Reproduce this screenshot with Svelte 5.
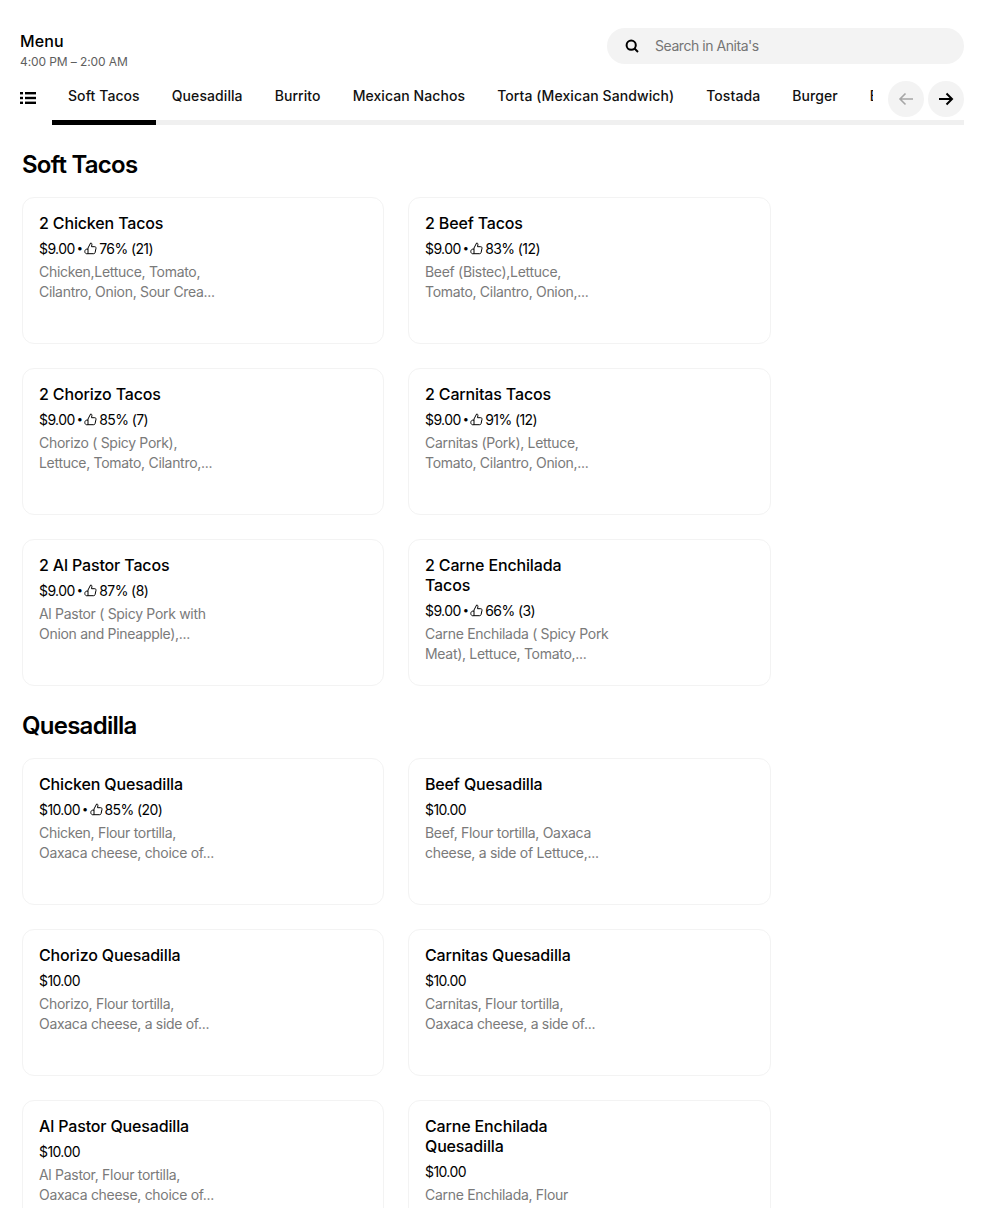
<script lang="ts">
  interface Item {
    name: string[];
    price: string;
    rating?: string;
    desc: string[];
  }

  const tabs = ['Soft Tacos', 'Quesadilla', 'Burrito', 'Mexican Nachos', 'Torta (Mexican Sandwich)', 'Tostada', 'Burger', 'Breakfast'];

  const sections: { title: string; items: Item[] }[] = [
    {
      title: 'Soft Tacos',
      items: [
        { name: ['2 Chicken Tacos'], price: '$9.00', rating: '76% (21)', desc: ['Chicken,Lettuce, Tomato,', 'Cilantro, Onion, Sour Crea...'] },
        { name: ['2 Beef Tacos'], price: '$9.00', rating: '83% (12)', desc: ['Beef (Bistec),Lettuce,', 'Tomato, Cilantro, Onion,...'] },
        { name: ['2 Chorizo Tacos'], price: '$9.00', rating: '85% (7)', desc: ['Chorizo ( Spicy Pork),', 'Lettuce, Tomato, Cilantro,...'] },
        { name: ['2 Carnitas Tacos'], price: '$9.00', rating: '91% (12)', desc: ['Carnitas (Pork), Lettuce,', 'Tomato, Cilantro, Onion,...'] },
        { name: ['2 Al Pastor Tacos'], price: '$9.00', rating: '87% (8)', desc: ['Al Pastor ( Spicy Pork with', 'Onion and Pineapple),...'] },
        { name: ['2 Carne Enchilada', 'Tacos'], price: '$9.00', rating: '66% (3)', desc: ['Carne Enchilada ( Spicy Pork', 'Meat), Lettuce, Tomato,...'] }
      ]
    },
    {
      title: 'Quesadilla',
      items: [
        { name: ['Chicken Quesadilla'], price: '$10.00', rating: '85% (20)', desc: ['Chicken, Flour tortilla,', 'Oaxaca cheese, choice of...'] },
        { name: ['Beef Quesadilla'], price: '$10.00', desc: ['Beef, Flour tortilla, Oaxaca', 'cheese, a side of Lettuce,...'] },
        { name: ['Chorizo Quesadilla'], price: '$10.00', desc: ['Chorizo, Flour tortilla,', 'Oaxaca cheese, a side of...'] },
        { name: ['Carnitas Quesadilla'], price: '$10.00', desc: ['Carnitas, Flour tortilla,', 'Oaxaca cheese, a side of...'] },
        { name: ['Al Pastor Quesadilla'], price: '$10.00', desc: ['Al Pastor, Flour tortilla,', 'Oaxaca cheese, choice of...'] },
        { name: ['Carne Enchilada', 'Quesadilla'], price: '$10.00', desc: ['Carne Enchilada, Flour'] }
      ]
    }
  ];
</script>

<div class="page">
  <header class="top">
    <div>
      <div class="menu-title">Menu</div>
      <div class="hours">4:00 PM – 2:00 AM</div>
    </div>
    <div class="search">
      <svg width="14" height="14" viewBox="0 0 14 14" fill="none" stroke="#000" stroke-width="2">
        <circle cx="6.2" cy="6.2" r="4.6" />
        <path d="M9.5 9.5 13 13" />
      </svg>
      <span>Search in Anita's</span>
    </div>
  </header>

  <nav class="tabbar">
    <svg class="list-icon" width="16" height="14" viewBox="0 0 16 14" fill="#000">
      <rect x="0" y="1" width="3" height="2.4" />
      <rect x="5" y="1" width="11" height="2.4" />
      <rect x="0" y="5.8" width="3" height="2.4" />
      <rect x="5" y="5.8" width="11" height="2.4" />
      <rect x="0" y="10.6" width="3" height="2.4" />
      <rect x="5" y="10.6" width="11" height="2.4" />
    </svg>
    <div class="tabs">
      {#each tabs as tab, i}
        <div class="tab" class:active={i === 0}>{tab}</div>
      {/each}
    </div>
    <div class="arrows">
      <button class="arrow" aria-label="Previous">
        <svg width="16" height="14" viewBox="0 0 16 14" fill="none" stroke="#a6a6a6" stroke-width="1.6">
          <path d="M15 7H2M7.5 1.5 2 7l5.5 5.5" />
        </svg>
      </button>
      <button class="arrow" aria-label="Next">
        <svg width="16" height="14" viewBox="0 0 16 14" fill="none" stroke="#000" stroke-width="2">
          <path d="M1 7h13M8.5 1.5 14 7l-5.5 5.5" />
        </svg>
      </button>
    </div>
  </nav>

  <main class="content">
    {#each sections as section}
      <section>
        <h2>{section.title}</h2>
        <div class="grid">
          {#each section.items as item}
            <article class="card">
              <h3>{#each item.name as line}<div>{line}</div>{/each}</h3>
              <div class="meta">
                <span>{item.price}</span>
                {#if item.rating}
                  <span class="dot">•</span>
                  <svg width="13" height="13" viewBox="0 0 13 13" fill="none" stroke="#000" stroke-width="1" stroke-linejoin="round">
                    <path d="M4 6 6.6 1c1 0 1.5.7 1.3 1.6L7.5 4.7h3.3c.8 0 1.4.8 1.2 1.6l-.9 4.2c-.2.8-.7 1.2-1.4 1.2H4V6Z" />
                    <path d="M4 7.2C2 6.6.8 8 .8 9.5s1.2 2.7 3.2 2.2" />
                  </svg>
                  <span>{item.rating}</span>
                {/if}
              </div>
              <p>{#each item.desc as line}<span>{line}</span>{/each}</p>
            </article>
          {/each}
        </div>
      </section>
    {/each}
  </main>
</div>

<style>
  :global(body) {
    background: #fff;
  }
  .page {
    height: 1208px;
    overflow: hidden;
    padding: 0 20px;
    box-sizing: border-box;
    font-family: Inter, "Liberation Sans", sans-serif;
    color: #000;
  }
  .top {
    display: flex;
    justify-content: space-between;
    align-items: flex-start;
    padding-top: 28px;
    height: 52px;
  }
  .menu-title {
    font-size: 16px;
    line-height: 28px;
    font-weight: 500;
    letter-spacing: 0.1px;
    margin-top: -1px;
  }
  .hours {
    font-size: 12px;
    line-height: 14px;
    color: #5e5e5e;
    letter-spacing: -0.1px;
  }
  .search {
    width: 357px;
    height: 36px;
    box-sizing: border-box;
    border-radius: 18px;
    background: #f3f3f3;
    display: flex;
    align-items: center;
    gap: 16px;
    padding: 0 0 1px 18px;
    font-size: 14px;
    letter-spacing: -0.45px;
    color: #757575;
  }
  .tabbar {
    display: flex;
    position: relative;
    height: 45px;
  }
  .list-icon {
    flex: none;
    margin: 11px 16px 0 0;
  }
  .tabs {
    display: flex;
    overflow: hidden;
    flex: 1;
    height: 45px;
    box-shadow: inset 0 -5px 0 #f0f0f0;
  }
  .tab {
    flex: none;
    padding: 8px 16px 0;
    height: 32px;
    font-size: 14px;
    line-height: 16px;
    font-weight: 500;
    letter-spacing: 0.08px;
    color: #111;
    border-bottom: 5px solid transparent;
  }
  .tab.active {
    border-bottom-color: #000;
  }
  .arrows {
    position: absolute;
    right: 0;
    top: 1px;
    display: flex;
    gap: 4px;
    padding-left: 15px;
    background: #fff;
  }
  .arrow {
    width: 36px;
    height: 36px;
    border: 0;
    padding: 0;
    border-radius: 50%;
    background: #f3f3f3;
    display: flex;
    align-items: center;
    justify-content: center;
  }
  .content {
    padding: 0 2px;
  }
  section {
    margin-bottom: 23px;
  }
  h2 {
    margin: 0;
    padding-top: 1px;
    height: 48px;
    font-size: 24px;
    line-height: 32px;
    font-weight: 600;
    letter-spacing: -0.75px;
  }
  section:first-child h2 {
    padding-top: 24px;
    height: 48px;
  }
  .grid {
    display: grid;
    grid-template-columns: 362px 363px;
    grid-auto-rows: 147px;
    gap: 24px;
  }
  .card {
    box-sizing: border-box;
    border: 1px solid #f3f3f3;
    border-radius: 12px;
    padding: 15px 16px;
  }
  h3 {
    margin: 0;
    font-size: 16px;
    line-height: 20px;
    font-weight: 500;
    letter-spacing: -0.15px;
  }
  .meta {
    display: flex;
    align-items: center;
    gap: 2px;
    height: 20px;
    margin-top: 5px;
    font-size: 14px;
    letter-spacing: -0.6px;
  }
  .dot {
    font-size: 11px;
  }
  p {
    margin: 4px 0 0;
    font-size: 14px;
    line-height: 20px;
    color: #7a7a7a;
    letter-spacing: -0.3px;
  }
  p span {
    display: block;
    white-space: nowrap;
  }
</style>
